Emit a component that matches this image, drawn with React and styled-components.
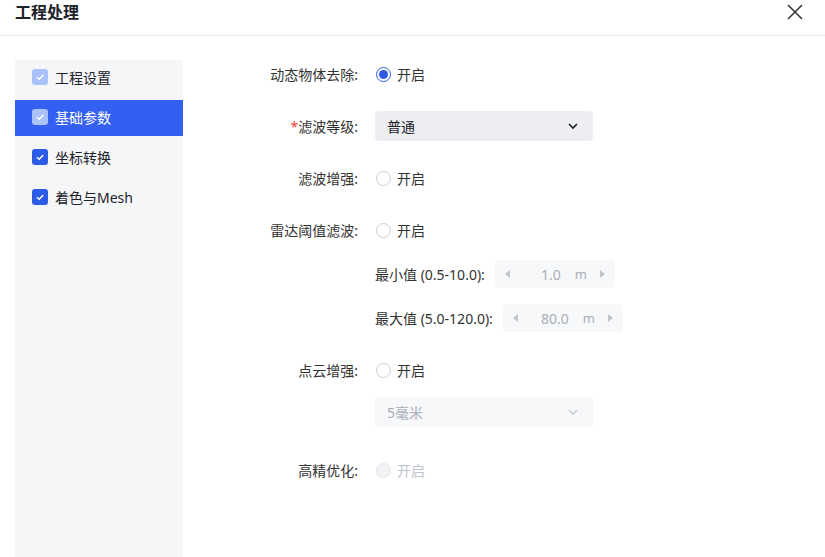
import React from "react";
import styled, { createGlobalStyle } from "styled-components";

const Global = createGlobalStyle`
  html, body { margin: 0; padding: 0; background: #fff; }
  body { font-family: "Noto Sans", "Noto Sans CJK SC", sans-serif; color: #1d2129; }
  * { box-sizing: border-box; }
`;

const Page = styled.div`
  width: 825px;
  height: 557px;
  display: flex;
  flex-direction: column;
  overflow: hidden;
  background: #fff;
`;

const Header = styled.div`
  height: 36px;
  flex: none;
  display: flex;
  align-items: center;
  justify-content: space-between;
  padding: 0 22px 12px 15px;
  border-bottom: 1px solid #e5e6eb;
`;

const Title = styled.div`
  font-size: 16px;
  font-weight: 700;
  color: #1d2129;
  line-height: 24px;
`;

const Close = styled.button`
  border: 0;
  background: none;
  padding: 0;
  width: 16px;
  height: 16px;
  display: flex;
  cursor: pointer;
`;

const Body = styled.div`
  flex: 1;
  display: flex;
  padding: 22px 0 0 15px;
  min-height: 0;
`;

const Sidebar = styled.div`
  width: 168px;
  flex: none;
  margin-top: 2px;
  background: #f5f6f8;
  display: flex;
  flex-direction: column;
  gap: 4px;
`;

const NavItem = styled.div`
  height: 36px;
  display: flex;
  align-items: center;
  gap: 7px;
  padding-left: 17px;
  padding-bottom: 2px;
  font-size: 14px;
  color: ${(p) => (p.$active ? "#fff" : "#1d2129")};
  background: ${(p) => (p.$active ? "#3360f1" : "transparent")};
`;

const Check = styled.span`
  width: 16px;
  height: 16px;
  border-radius: 3px;
  display: flex;
  align-items: center;
  justify-content: center;
  background: ${(p) => (p.$light ? "#abc1fb" : "#2d5be8")};
`;

const Form = styled.div`
  flex: 1;
  display: flex;
  flex-direction: column;
`;

const Item = styled.div`
  display: flex;
  margin-bottom: ${(p) => p.$mb ?? 20}px;
`;

const Label = styled.div`
  width: 192px;
  flex: none;
  height: 32px;
  display: flex;
  align-items: center;
  justify-content: flex-end;
  padding-right: 17px;
  font-size: 14px;
  color: #333;
  white-space: nowrap;
`;

const Star = styled.span`
  color: #f53f3f;
`;

const Controls = styled.div`
  display: flex;
  flex-direction: column;
  gap: ${(p) => p.$gap ?? 12}px;
`;

const Row = styled.div`
  height: 32px;
  display: flex;
  align-items: center;
  gap: ${(p) => p.$gap ?? 0}px;
  font-size: 14px;
  color: #333;
`;

const Radio = styled.span`
  width: 15px;
  height: 15px;
  border-radius: 50%;
  flex: none;
  margin-left: 1px;
  position: relative;
  border: ${(p) => (p.$checked ? "1.5px solid #2d5be8" : "1px solid #c9cdd4")};
  background: ${(p) => (p.$disabled ? "#f2f3f5" : "#fff")};
  ${(p) => p.$disabled && "border-color: #e5e6eb;"}
  &::after {
    content: "";
    display: ${(p) => (p.$checked ? "block" : "none")};
    position: absolute;
    inset: 2px;
    border-radius: 50%;
    background: #2d5be8;
  }
`;

const RadioText = styled.span`
  margin-left: 6px;
  font-size: 14px;
  color: ${(p) => (p.$disabled ? "#c0c4cc" : "#333")};
`;

const Select = styled.div`
  width: 218px;
  height: 30px;
  border-radius: 4px;
  background: ${(p) => (p.$disabled ? "#f7f8fa" : "#eceef1")};
  color: ${(p) => (p.$disabled ? "#a9aeb8" : "#1d2129")};
  display: flex;
  align-items: center;
  justify-content: space-between;
  padding: 0 14px 0 12px;
  font-size: 14px;
`;

const SubLabel = styled.span`
  font-size: 14px;
  color: #333;
  white-space: nowrap;
`;

const NumberBox = styled.div`
  width: 120px;
  height: 28px;
  border-radius: 4px;
  background: #f7f8fa;
  display: flex;
  align-items: center;
  padding: 0 10px;
  color: #a9aeb8;
  font-size: 14px;
`;

const Value = styled.span`
  flex: 1;
  text-align: right;
  padding-right: 14px;
`;

const Unit = styled.span`
  width: 24px;
  font-size: 13px;
`;

const Tri = ({ dir }) => (
  <svg width="6" height="8" viewBox="0 0 6 8">
    {dir === "left" ? (
      <path d="M5 0 L5 8 L0 4 Z" fill="#c2c6cc" />
    ) : (
      <path d="M1 0 L1 8 L6 4 Z" fill="#c2c6cc" />
    )}
  </svg>
);

const Chevron = ({ color }) => (
  <svg width="12" height="12" viewBox="0 0 12 12">
    <path d="M2 4 L6 8 L10 4" fill="none" stroke={color} strokeWidth="1.6" />
  </svg>
);

const Tick = () => (
  <svg width="10" height="10" viewBox="0 0 10 10">
    <path d="M1.8 5.2 L4.2 7.3 L8.3 3" fill="none" stroke="#fff" strokeWidth="1.4" />
  </svg>
);

const navItems = [
  { label: "工程设置", light: true },
  { label: "基础参数", light: true, active: true },
  { label: "坐标转换" },
  { label: "着色与Mesh" },
];

export default function App() {
  return (
    <Page>
      <Global />
      <Header>
        <Title>工程处理</Title>
        <Close aria-label="关闭">
          <svg width="16" height="16" viewBox="0 0 16 16">
            <path d="M1 1 L15 15 M15 1 L1 15" stroke="#333" strokeWidth="1.5" />
          </svg>
        </Close>
      </Header>
      <Body>
        <Sidebar>
          {navItems.map((n) => (
            <NavItem key={n.label} $active={n.active}>
              <Check $light={n.light}>
                <Tick />
              </Check>
              {n.label}
            </NavItem>
          ))}
        </Sidebar>
        <Form>
          <Item>
            <Label>动态物体去除:</Label>
            <Controls>
              <Row>
                <Radio $checked />
                <RadioText>开启</RadioText>
              </Row>
            </Controls>
          </Item>
          <Item>
            <Label>
              <Star>*</Star>滤波等级:
            </Label>
            <Controls>
              <Row>
                <Select>
                  普通
                  <Chevron color="#1d2129" />
                </Select>
              </Row>
            </Controls>
          </Item>
          <Item>
            <Label>滤波增强:</Label>
            <Controls>
              <Row>
                <Radio />
                <RadioText>开启</RadioText>
              </Row>
            </Controls>
          </Item>
          <Item>
            <Label>雷达阈值滤波:</Label>
            <Controls>
              <Row>
                <Radio />
                <RadioText>开启</RadioText>
              </Row>
              <Row $gap={10}>
                <SubLabel>最小值 (0.5-10.0):</SubLabel>
                <NumberBox>
                  <Tri dir="left" />
                  <Value>1.0</Value>
                  <Unit>m</Unit>
                  <Tri dir="right" />
                </NumberBox>
              </Row>
              <Row $gap={10}>
                <SubLabel>最大值 (5.0-120.0):</SubLabel>
                <NumberBox>
                  <Tri dir="left" />
                  <Value>80.0</Value>
                  <Unit>m</Unit>
                  <Tri dir="right" />
                </NumberBox>
              </Row>
            </Controls>
          </Item>
          <Item $mb={26}>
            <Label>点云增强:</Label>
            <Controls $gap={10}>
              <Row>
                <Radio />
                <RadioText>开启</RadioText>
              </Row>
              <Row>
                <Select $disabled>
                  5毫米
                  <Chevron color="#c9cdd4" />
                </Select>
              </Row>
            </Controls>
          </Item>
          <Item>
            <Label>高精优化:</Label>
            <Controls>
              <Row>
                <Radio $disabled />
                <RadioText $disabled>开启</RadioText>
              </Row>
            </Controls>
          </Item>
        </Form>
      </Body>
    </Page>
  );
}
